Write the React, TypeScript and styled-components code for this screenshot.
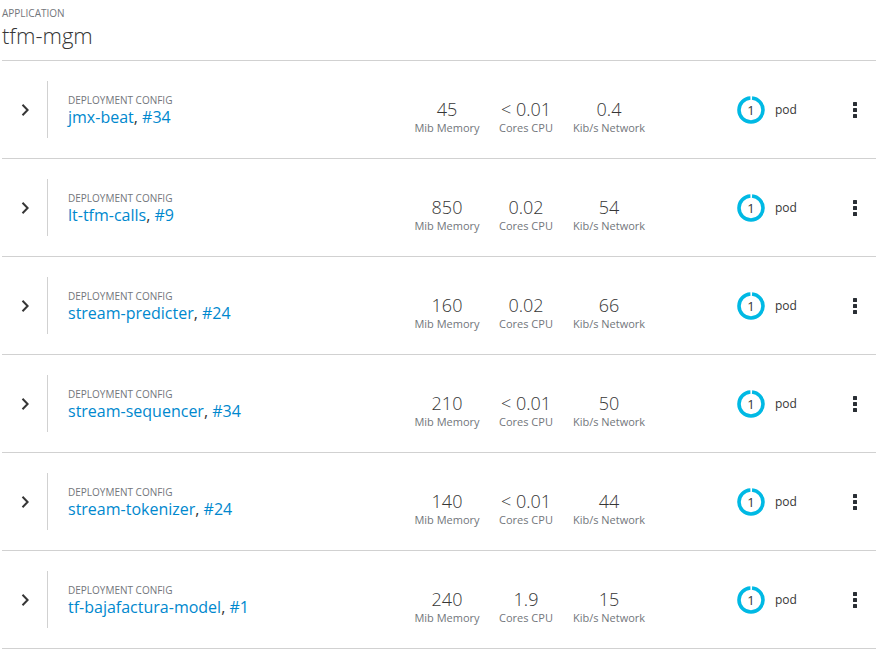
import React from "react";
import styled, { createGlobalStyle } from "styled-components";

const Global = createGlobalStyle`
  html, body { margin: 0; padding: 0; background: #fff; }
  body { font-family: "Open Sans", "Liberation Sans", sans-serif; color: #363636; }
`;

const Page = styled.div`
  padding: 0 0 0 2px;
  width: 874px;
`;

const Header = styled.header`
  height: 60px;
  box-sizing: border-box;
  padding-top: 6px;
`;

const Kicker = styled.div`
  font-size: 10px;
  line-height: 14px;
  color: #72767b;
  text-transform: uppercase;
`;

const Title = styled.h1`
  margin: 1px 0 0;
  font-size: 22px;
  line-height: 28px;
  font-weight: 300;
  color: #363636;
`;

const List = styled.div`
  border-bottom: 1px solid #d1d1d1;
`;

const Row = styled.div`
  display: flex;
  align-items: center;
  height: 98px;
  box-sizing: border-box;
  border-top: 1px solid #d1d1d1;
`;

const Toggle = styled.div`
  width: 45px;
  display: flex;
  justify-content: center;
  align-items: center;
`;

const Divider = styled.div`
  width: 1px;
  height: 57px;
  background: #d1d1d1;
`;

const Info = styled.div`
  width: 339px;
  padding: 0 0 0 20px;
`;

const ConfigLabel = styled.div`
  font-size: 10px;
  line-height: 14px;
  color: #72767b;
  text-transform: uppercase;
`;

const Name = styled.div`
  font-size: 16px;
  line-height: 20px;
  color: #363636;
`;

const Link = styled.a`
  color: #0088ce;
  text-decoration: none;
`;

const Metrics = styled.div`
  display: flex;
  align-items: flex-start;
  padding-top: 14px;
`;

const Metric = styled.div<{ $w: number }>`
  width: ${(p) => p.$w}px;
  display: flex;
  flex-direction: column;
  align-items: center;
`;

const MetricValue = styled.div`
  font-size: 18px;
  line-height: 19px;
  font-weight: 300;
  color: #363636;
`;

const MetricLabel = styled.div`
  font-size: 11px;
  line-height: 13px;
  margin-top: 2px;
  color: #72767b;
  white-space: nowrap;
`;

const Pods = styled.div`
  margin-left: 84px;
  display: flex;
  align-items: center;
  gap: 10px;
  width: 90px;
`;

const DonutWrap = styled.div`
  position: relative;
  width: 28px;
  height: 28px;
`;

const DonutCount = styled.span`
  position: absolute;
  inset: 0;
  display: flex;
  align-items: center;
  justify-content: center;
  font-size: 13px;
  color: #363636;
`;

const PodText = styled.span`
  font-size: 12px;
  color: #363636;
`;

const Kebab = styled.div`
  margin-left: 20px;
  display: flex;
  flex-direction: column;
  gap: 2px;
  padding: 0 6px;
`;

const Dot = styled.span`
  width: 4px;
  height: 4px;
  background: #292e34;
  border-radius: 0.5px;
`;

const Chevron = () => (
  <svg width="10" height="14" viewBox="0 0 10 14">
    <path d="M2.5 1.8 L7.6 7 L2.5 12.2" fill="none" stroke="#363636" strokeWidth="2" />
  </svg>
);

const Donut = () => {
  const r = 12;
  const c = 2 * Math.PI * r;
  const gap = 2.2;
  return (
    <DonutWrap>
      <svg width="28" height="28" viewBox="0 0 28 28">
        <circle
          cx="14"
          cy="14"
          r={r}
          fill="none"
          stroke="#00b9e4"
          strokeWidth="3.6"
          strokeDasharray={`${c - gap} ${gap}`}
          strokeDashoffset={-gap / 2}
          transform="rotate(-90 14 14)"
        />
      </svg>
      <DonutCount>1</DonutCount>
    </DonutWrap>
  );
};

type D = { name: string; num: string; mem: string; cpu: string; net: string };

const data: D[] = [
  { name: "jmx-beat", num: "#34", mem: "45", cpu: "< 0.01", net: "0.4" },
  { name: "lt-tfm-calls", num: "#9", mem: "850", cpu: "0.02", net: "54" },
  { name: "stream-predicter", num: "#24", mem: "160", cpu: "0.02", net: "66" },
  { name: "stream-sequencer", num: "#34", mem: "210", cpu: "< 0.01", net: "50" },
  { name: "stream-tokenizer", num: "#24", mem: "140", cpu: "< 0.01", net: "44" },
  { name: "tf-bajafactura-model", num: "#1", mem: "240", cpu: "1.9", net: "15" },
];

export default function App() {
  return (
    <Page>
      <Global />
      <Header>
        <Kicker>Application</Kicker>
        <Title>tfm-mgm</Title>
      </Header>
      <List>
        {data.map((d) => (
          <Row key={d.name}>
            <Toggle>
              <Chevron />
            </Toggle>
            <Divider />
            <Info>
              <ConfigLabel>Deployment Config</ConfigLabel>
              <Name>
                <Link href="#">{d.name}</Link>, <Link href="#">{d.num}</Link>
              </Name>
            </Info>
            <Metrics>
              <Metric $w={80}>
                <MetricValue>{d.mem}</MetricValue>
                <MetricLabel>Mib Memory</MetricLabel>
              </Metric>
              <Metric $w={78}>
                <MetricValue>{d.cpu}</MetricValue>
                <MetricLabel>Cores CPU</MetricLabel>
              </Metric>
              <Metric $w={88}>
                <MetricValue>{d.net}</MetricValue>
                <MetricLabel>Kib/s Network</MetricLabel>
              </Metric>
            </Metrics>
            <Pods>
              <Donut />
              <PodText>pod</PodText>
            </Pods>
            <Kebab>
              <Dot />
              <Dot />
              <Dot />
            </Kebab>
          </Row>
        ))}
      </List>
    </Page>
  );
}
